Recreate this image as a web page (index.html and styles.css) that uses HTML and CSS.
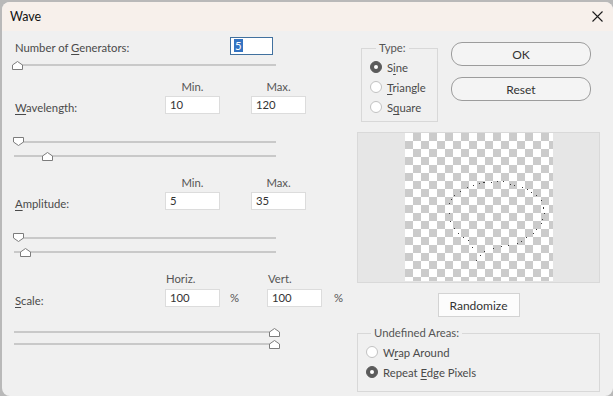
FILE: index.html
```html
<!DOCTYPE html>
<html>
<head>
<meta charset="utf-8">
<link rel="stylesheet" href="styles.css">
</head>
<body>
<div class="window">
  <div class="titlebar">
    <span class="title">Wave</span>
    <svg class="close" width="11" height="11" viewBox="0 0 11 11"><path d="M0.5 0.5 L10.5 10.5 M10.5 0.5 L0.5 10.5" stroke="#1c1c1c" stroke-width="1.1" fill="none"/></svg>
  </div>
  <div class="main">
    <div class="left">
      <div class="gen-row">
        <span class="label gen-label">Number of <u>G</u>enerators:</span>
        <div class="field focus"><span class="sel">5</span></div>
      </div>
      <div class="slider gen-slider">
        <svg class="thumb up" style="left:-2px" viewBox="0 0 11 9"><path d="M0.5 8.5 V4 L5.5 0.5 L10.5 4 V8.5 Z" fill="#fff" stroke="#7c7c7c"/></svg>
      </div>

      <div class="group">
        <div class="heads"><span class="head">Min.</span><span class="head">Max.</span></div>
        <div class="inrow">
          <span class="label"><u>W</u>avelength:</span>
          <div class="field">10</div>
          <div class="field">120</div>
        </div>
        <div class="slider s1">
          <svg class="thumb down" style="left:-1px" viewBox="0 0 11 9"><path d="M0.5 0.5 V5 L5.5 8.5 L10.5 5 V0.5 Z" fill="#fff" stroke="#7c7c7c"/></svg>
        </div>
        <div class="slider s2">
          <svg class="thumb up" style="left:28px" viewBox="0 0 11 9"><path d="M0.5 8.5 V4 L5.5 0.5 L10.5 4 V8.5 Z" fill="#fff" stroke="#7c7c7c"/></svg>
        </div>
      </div>

      <div class="group">
        <div class="heads"><span class="head">Min.</span><span class="head">Max.</span></div>
        <div class="inrow">
          <span class="label"><u>A</u>mplitude:</span>
          <div class="field">5</div>
          <div class="field">35</div>
        </div>
        <div class="slider s1">
          <svg class="thumb down" style="left:-1px" viewBox="0 0 11 9"><path d="M0.5 0.5 V5 L5.5 8.5 L10.5 5 V0.5 Z" fill="#fff" stroke="#7c7c7c"/></svg>
        </div>
        <div class="slider s2">
          <svg class="thumb up" style="left:6px" viewBox="0 0 11 9"><path d="M0.5 8.5 V4 L5.5 0.5 L10.5 4 V8.5 Z" fill="#fff" stroke="#7c7c7c"/></svg>
        </div>
      </div>

      <div class="group scale">
        <div class="heads"><span class="head hz">Horiz.</span><span class="head vt">Vert.</span></div>
        <div class="inrow">
          <span class="label"><u>S</u>cale:</span>
          <div class="field">100</div>
          <span class="pct">%</span>
          <div class="field">100</div>
          <span class="pct pct2">%</span>
        </div>
        <div class="slider s1">
          <svg class="thumb up" style="left:255px" viewBox="0 0 11 9"><path d="M0.5 8.5 V4 L5.5 0.5 L10.5 4 V8.5 Z" fill="#fff" stroke="#7c7c7c"/></svg>
        </div>
        <div class="slider s2">
          <svg class="thumb up" style="left:255px" viewBox="0 0 11 9"><path d="M0.5 8.5 V4 L5.5 0.5 L10.5 4 V8.5 Z" fill="#fff" stroke="#7c7c7c"/></svg>
        </div>
      </div>
    </div>

    <div class="right">
      <div class="top">
        <fieldset class="box type">
          <legend>Type:</legend>
          <div class="radio"><span class="dot on"></span><span>S<u>i</u>ne</span></div>
          <div class="radio"><span class="dot"></span><span><u>T</u>riangle</span></div>
          <div class="radio"><span class="dot"></span><span>S<u>q</u>uare</span></div>
        </fieldset>
        <div class="btns">
          <div class="btn">OK</div>
          <div class="btn">Reset</div>
        </div>
      </div>
      <div class="preview">
        <div class="checker">
          <svg width="148" height="148" viewBox="0 0 148 148">
            <g fill="#3a3a3a">
              <rect x="44" y="70" width="1" height="1"/>
              <rect x="46" y="66" width="1" height="1"/>
              <rect x="49" y="62" width="1" height="1"/>
              <rect x="55" y="58" width="1" height="1"/>
              <rect x="62" y="54" width="1" height="1"/>
              <rect x="68" y="52" width="1" height="1"/>
              <rect x="74" y="50" width="1" height="1"/>
              <rect x="78" y="49" width="2" height="1"/>
              <rect x="86" y="49" width="1" height="1"/>
              <rect x="92" y="48" width="1" height="1"/>
              <rect x="98" y="48" width="1" height="1"/>
              <rect x="105" y="51" width="1" height="1"/>
              <rect x="109" y="52" width="1" height="1"/>
              <rect x="117" y="54" width="1" height="1"/>
              <rect x="122" y="56" width="1" height="1"/>
              <rect x="126" y="59" width="1" height="1"/>
              <rect x="131" y="62" width="1" height="1"/>
              <rect x="136" y="67" width="1" height="1"/>
              <rect x="138" y="74" width="1" height="2"/>
              <rect x="139" y="80" width="1" height="1"/>
              <rect x="137" y="86" width="1" height="1"/>
              <rect x="136" y="90" width="1" height="1"/>
              <rect x="131" y="96" width="1" height="1"/>
              <rect x="128" y="100" width="1" height="1"/>
              <rect x="121" y="104" width="1" height="1"/>
              <rect x="116" y="108" width="1" height="1"/>
              <rect x="112" y="110" width="1" height="1"/>
              <rect x="103" y="112" width="1" height="1"/>
              <rect x="96" y="113" width="1" height="1"/>
              <rect x="88" y="115" width="1" height="1"/>
              <rect x="79" y="118" width="1" height="1"/>
              <rect x="75" y="122" width="1" height="1"/>
              <rect x="71" y="127" width="1" height="1"/>
              <rect x="67" y="114" width="1" height="1"/>
              <rect x="63" y="107" width="1" height="1"/>
              <rect x="58" y="104" width="1" height="1"/>
              <rect x="53" y="100" width="1" height="1"/>
              <rect x="49" y="95" width="1" height="1"/>
              <rect x="45" y="88" width="1" height="1"/>
              <rect x="44" y="80" width="1" height="1"/>
            </g>
          </svg>
        </div>
      </div>
      <div class="rand-row"><div class="rand">Randomize</div></div>
      <fieldset class="box undef">
        <legend>Undefined Areas:</legend>
        <div class="radio"><span class="dot"></span><span>W<u>r</u>ap Around</span></div>
        <div class="radio"><span class="dot on"></span><span>Repeat <u>E</u>dge Pixels</span></div>
      </fieldset>
    </div>
  </div>
</div>
</body>
</html>
```

FILE: styles.css
```css
* { box-sizing: border-box; }
html, body { margin: 0; padding: 0; }
body {
  width: 613px;
  height: 396px;
  overflow: hidden;
  background: #b9b9b9;
  font-family: Lato, "Noto Sans", sans-serif;
  font-size: 11.3px;
  color: #4a4a4a;
}
u { text-decoration: underline; text-underline-offset: 2px; }

.window {
  margin: 2px 0 0 2px;
  width: 611px;
  height: 394px;
  background: #f0f0f0;
  border-radius: 8px;
  overflow: hidden;
  display: flex;
  flex-direction: column;
}
.titlebar {
  flex: none;
  height: 29px;
  background: #f7f0eb;
  display: flex;
  align-items: center;
  justify-content: space-between;
  padding: 0 10px 0 8px;
}
.title { font-size: 12.5px; color: #111; }
.close { display: block; }

.main { display: flex; flex: 1; }
.left { width: 355px; flex: none; padding-left: 13px; }
.right { width: 256px; flex: none; display: flex; flex-direction: column; }

.label { line-height: 14px; }

.gen-row { display: flex; align-items: center; margin-top: 6px; height: 18px; }
.gen-label { width: 215px; margin-top: 3px; }

.field {
  flex: none;
  width: 55px;
  height: 18px;
  background: #fff;
  border: 1px solid #dcdcdc;
  padding-left: 4px;
  line-height: 16px;
  color: #333;
}
.field.focus { width: 43px; border-color: #41719f; padding-left: 3px; }
.sel { background: #3474c2; color: #fff; padding: 0 1px; }

.slider { position: relative; width: 262px; height: 10px; margin-left: -1px; }
.slider::before {
  content: "";
  position: absolute;
  left: 0; right: 0;
  top: 4px;
  height: 2px;
  background: #c9c9c9;
}
.thumb { position: absolute; top: 0; width: 11px; height: 9px; }
.thumb.up { top: 1px; }

.gen-slider { margin-top: 5px; }

.group { margin-top: 10px; }
.group + .group { margin-top: 15px; }
.heads { display: flex; height: 14px; line-height: 14px; padding-left: 150px; }
.head { width: 55px; text-align: center; color: #555; }
.head + .head { margin-left: 31px; }
.inrow { display: flex; height: 18px; margin-top: 2px; }
.inrow .label { width: 150px; flex: none; line-height: 13px; margin-top: 5px; }
.inrow .field + .field { margin-left: 31px; }
.s1 { margin-top: 23px; }
.s2 { margin-top: 4px; }

.scale .head { text-align: left; padding-left: 1px; }
.scale .hz { width: 102px; }
.scale .head + .head { margin-left: 0; }
.scale .inrow { margin-top: 3px; }
.pct { width: 47px; flex: none; padding-left: 10px; line-height: 18px; color: #555; }
.pct2 { padding-left: 12px; }
.scale .s1 { margin-top: 20px; }
.scale .s2 { margin-top: 2px; }

.top { display: flex; }
.box {
  margin: 0;
  border: 1px solid #d8d8d8;
  min-width: 0;
}
.box legend { padding: 0 3px; line-height: 14px; color: #555; }
.type { margin: 10px 0 0 4px; width: 77px; padding: 2px 0 4px 8px; }
.type legend { margin-left: 6px; }

.radio { display: flex; align-items: center; height: 20px; white-space: nowrap; }
.dot {
  flex: none;
  width: 12px;
  height: 12px;
  border-radius: 50%;
  border: 1px solid #c2c2c2;
  background: #fff;
  margin-right: 5px;
  display: flex;
  align-items: center;
  justify-content: center;
}
.dot.on { background: #5b5b5b; border-color: #5b5b5b; }
.dot.on::after { content: ""; width: 4px; height: 4px; border-radius: 50%; background: #fff; }

.btns { margin: 11px 0 0 13px; display: flex; flex-direction: column; gap: 11px; }
.btn {
  width: 140px;
  height: 24px;
  border: 1px solid #9c9c9c;
  border-radius: 11px;
  background: #f4f4f4;
  display: flex;
  align-items: center;
  justify-content: center;
  font-size: 12px;
  color: #333;
}

.preview {
  margin-top: 10px;
  width: 243px;
  height: 151px;
  background: #e6e6e6;
  border: 1px solid #d9d9d9;
  display: flex;
  justify-content: center;
}
.checker {
  width: 148px;
  height: 148px;
  background-color: #fff;
  background-image: conic-gradient(#cbcbcb 25%, #fff 0 50%, #cbcbcb 0 75%, #fff 0);
  background-size: 16px 16px;
}
.checker svg { display: block; }

.rand-row { width: 243px; margin-top: 10px; display: flex; justify-content: center; }
.rand {
  width: 82px;
  height: 24px;
  border: 1px solid #d3d3d3;
  background: #fcfcfc;
  display: flex;
  align-items: center;
  justify-content: center;
  font-size: 12px;
  color: #333;
}

.undef { margin-top: 9px; width: 243px; padding: 2px 0 9px 8px; }
.undef legend { margin-left: 5px; }
```
